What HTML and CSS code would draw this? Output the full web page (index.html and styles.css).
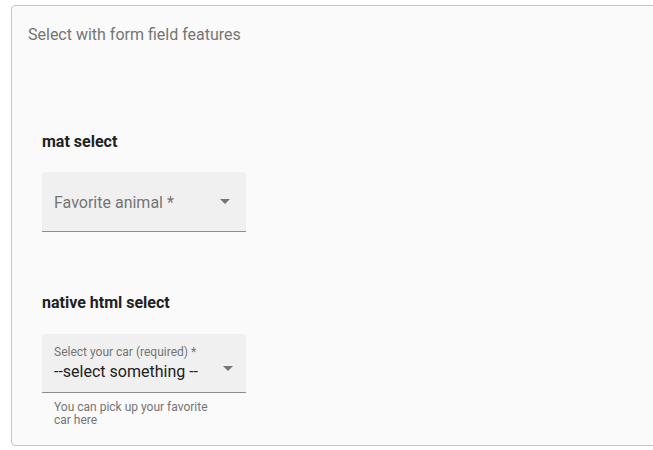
FILE: index.html
```html
<!DOCTYPE html>
<html>
<head>
<meta charset="utf-8">
<link rel="stylesheet" href="styles.css">
</head>
<body>
<div class="panel">
  <div class="title">Select with form field features</div>
  <div class="content">
    <h4 class="heading first">mat select</h4>
    <div class="field">
      <div class="fill mat">
        <span class="placeholder">Favorite animal *</span>
        <span class="arrow"></span>
      </div>
    </div>
    <h4 class="heading second">native html select</h4>
    <div class="field">
      <div class="fill native">
        <div class="native-inner">
          <span class="label">Select your car (required) *</span>
          <span class="value">--select something --</span>
        </div>
        <span class="arrow"></span>
      </div>
      <div class="hint">You can pick up your favorite car here</div>
    </div>
  </div>
</div>
</body>
</html>
```
FILE: styles.css
```css
html, body {
  margin: 0;
  padding: 0;
  background: #ffffff;
}
body {
  padding: 5px 0 0 11px;
  font-family: Roboto, "Liberation Sans", sans-serif;
}
.panel {
  width: 660px;
  height: 439px;
  background: #fafafa;
  border: 1px solid #c6c6c6;
  border-radius: 4px;
  box-sizing: content-box;
}
.title {
  padding: 19px 0 0 16px;
  font-size: 16px;
  line-height: 20px;
  color: #757575;
}
.content {
  padding-left: 30px;
}
.heading {
  margin: 0;
  font-size: 16px;
  line-height: 20px;
  font-weight: 700;
  color: #212121;
}
.heading.first { margin-top: 87px; }
.heading.second { margin-top: 61px; }
.field {
  width: 204px;
  margin-top: 20px;
}
.heading.second + .field { margin-top: 21px; }
.fill {
  background: #f0f0f0;
  border-radius: 4px 4px 0 0;
  border-bottom: 1px solid #8d8d8d;
  display: flex;
  align-items: center;
  padding: 0 13px 0 12px;
  box-sizing: border-box;
}
.fill.mat {
  height: 60px;
  padding-right: 16px;
}
.fill.native {
  height: 59px;
  align-items: flex-start;
}
.placeholder {
  flex: 1;
  font-size: 16px;
  line-height: 20px;
  color: #757575;
  margin-top: 3px;
}
.native-inner {
  flex: 1;
  display: flex;
  flex-direction: column;
  padding-top: 11px;
}
.label {
  font-size: 12px;
  line-height: 14px;
  color: #757575;
}
.value {
  font-size: 16px;
  line-height: 20px;
  color: #212121;
  margin-top: 3px;
}
.arrow {
  width: 0;
  height: 0;
  border-left: 5px solid transparent;
  border-right: 5px solid transparent;
  border-top: 5px solid #757575;
}
.fill.mat .arrow { margin-top: -1px; }
.fill.native .arrow { margin-top: 32px; }
.hint {
  padding: 8px 24px 0 12px;
  font-size: 12px;
  line-height: 13px;
  color: #757575;
}
```
